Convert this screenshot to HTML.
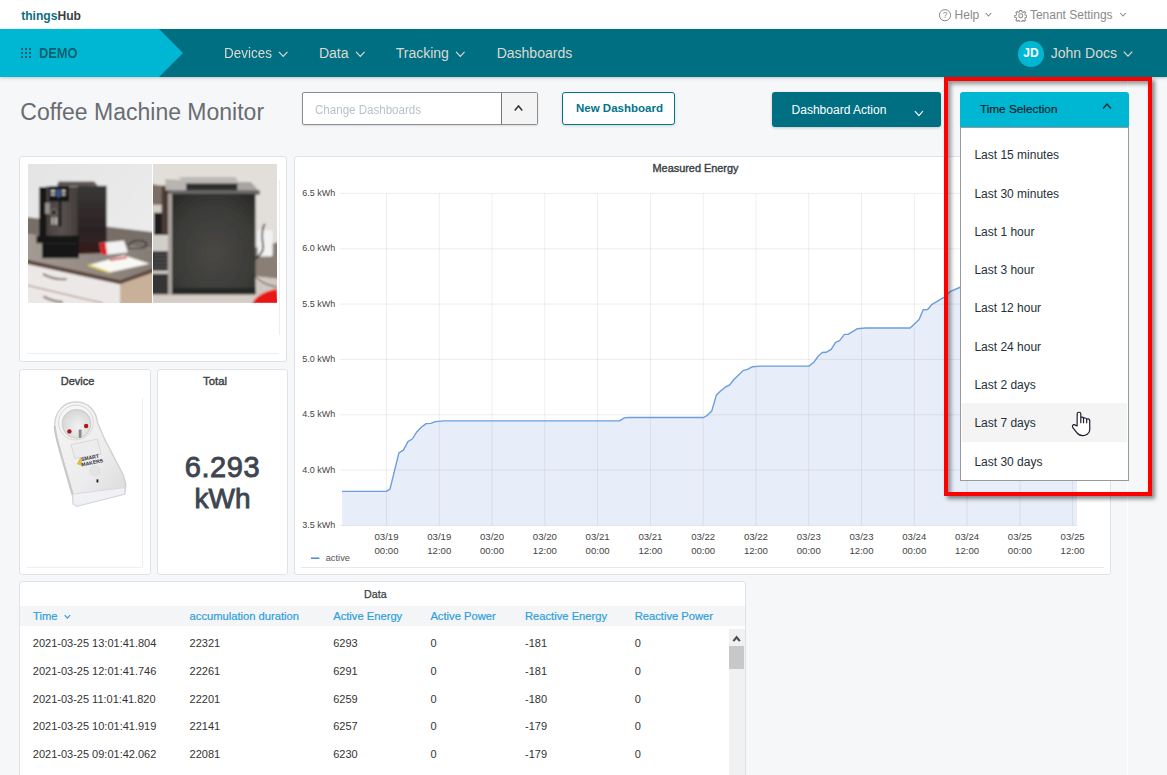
<!DOCTYPE html>
<html><head><meta charset="utf-8">
<style>
*{box-sizing:border-box;margin:0;padding:0}
html,body{width:1167px;height:775px;overflow:hidden;background:#f6f7f9;font-family:"Liberation Sans",sans-serif;position:relative}
.a{position:absolute}
.t{position:absolute;white-space:nowrap;line-height:1}
.card{position:absolute;background:#fff;border:1px solid #dfe3e8;border-radius:3px}
</style></head>
<body>

<div class="a" style="left:0px;top:0px;width:1167px;height:29px;background:#fff"></div>
<div class="t" style="left:21.20px;top:10.36px;font-size:12.1px;color:#0d6e80;font-weight:bold;">things<span style="color:#3a3f44">Hub</span></div>
<svg class="a" style="left:938px;top:9px" width="14" height="13"><circle cx="7" cy="6.2" r="5.6" fill="none" stroke="#8a8a8a" stroke-width="1"/><text x="7" y="9.3" font-size="8.5" text-anchor="middle" fill="#8a8a8a" font-family="Liberation Sans">?</text></svg>
<div class="t" style="left:954.60px;top:8.74px;font-size:12px;color:#8a8a8a;font-weight:normal;">Help</div>
<svg class="a" style="left:0;top:0;overflow:visible" width="1" height="1"><polyline points="985.75,13.0 988.5,16.0 991.25,13.0" fill="none" stroke="#8a8a8a" stroke-width="1.1"/></svg>
<svg class="a" style="left:1013.5px;top:8.5px" width="13.5" height="13.5" viewBox="0 0 24 24"><path fill="none" stroke="#8a8a8a" stroke-width="1.8" d="M12 8.5a3.5 3.5 0 1 0 0 7a3.5 3.5 0 1 0 0-7z M10.3 2.5h3.4l.5 2.6 1.9.8 2.2-1.5 2.4 2.4-1.5 2.2.8 1.9 2.6.5v3.4l-2.6.5-.8 1.9 1.5 2.2-2.4 2.4-2.2-1.5-1.9.8-.5 2.6h-3.4l-.5-2.6-1.9-.8-2.2 1.5-2.4-2.4 1.5-2.2-.8-1.9-2.6-.5v-3.4l2.6-.5.8-1.9-1.5-2.2 2.4-2.4 2.2 1.5 1.9-.8z"/></svg>
<div class="t" style="left:1029.90px;top:8.74px;font-size:12px;color:#8a8a8a;font-weight:normal;">Tenant Settings</div>
<svg class="a" style="left:0;top:0;overflow:visible" width="1" height="1"><polyline points="1120.25,13.0 1123,16.0 1125.75,13.0" fill="none" stroke="#8a8a8a" stroke-width="1.1"/></svg>
<div class="a" style="left:0px;top:29px;width:1167px;height:48px;background:#006f82;box-shadow:0 1px 3px rgba(0,0,0,.22)"></div>
<svg class="a" style="left:0;top:29px" width="190" height="48"><polygon points="0,0 159,0 183,24 159,48 0,48" fill="#00b7d3"/></svg>
<div class="a" style="left:21px;top:48px;width:2.1999999999999993px;height:2.200000000000003px;background:#0a5f70"></div>
<div class="a" style="left:21px;top:52px;width:2.1999999999999993px;height:2.200000000000003px;background:#0a5f70"></div>
<div class="a" style="left:21px;top:56px;width:2.1999999999999993px;height:2.200000000000003px;background:#0a5f70"></div>
<div class="a" style="left:25px;top:48px;width:2.1999999999999993px;height:2.200000000000003px;background:#0a5f70"></div>
<div class="a" style="left:25px;top:52px;width:2.1999999999999993px;height:2.200000000000003px;background:#0a5f70"></div>
<div class="a" style="left:25px;top:56px;width:2.1999999999999993px;height:2.200000000000003px;background:#0a5f70"></div>
<div class="a" style="left:29px;top:48px;width:2.1999999999999993px;height:2.200000000000003px;background:#0a5f70"></div>
<div class="a" style="left:29px;top:52px;width:2.1999999999999993px;height:2.200000000000003px;background:#0a5f70"></div>
<div class="a" style="left:29px;top:56px;width:2.1999999999999993px;height:2.200000000000003px;background:#0a5f70"></div>
<div class="t" style="left:39.40px;top:44.88px;font-size:15.5px;color:#0a5f70;font-weight:bold;transform:scaleX(0.825);transform-origin:0 0">DEMO</div>
<div class="t" style="left:223.50px;top:46.15px;font-size:14px;color:#dcd9d2;font-weight:normal;transform:scaleX(0.964);transform-origin:0 0">Devices</div>
<svg class="a" style="left:0;top:0;overflow:visible" width="1" height="1"><polyline points="278.95,51.95 283.2,56.45 287.45,51.95" fill="none" stroke="#dcd9d2" stroke-width="1.2"/></svg>
<div class="t" style="left:318.90px;top:46.15px;font-size:14px;color:#dcd9d2;font-weight:normal;">Data</div>
<svg class="a" style="left:0;top:0;overflow:visible" width="1" height="1"><polyline points="356.05,51.95 360.3,56.45 364.55,51.95" fill="none" stroke="#dcd9d2" stroke-width="1.2"/></svg>
<div class="t" style="left:395.70px;top:46.15px;font-size:14px;color:#dcd9d2;font-weight:normal;">Tracking</div>
<svg class="a" style="left:0;top:0;overflow:visible" width="1" height="1"><polyline points="456.05,51.95 460.3,56.45 464.55,51.95" fill="none" stroke="#dcd9d2" stroke-width="1.2"/></svg>
<div class="t" style="left:496.70px;top:46.15px;font-size:14px;color:#dcd9d2;font-weight:normal;">Dashboards</div>
<div class="a" style="left:1018.2px;top:41px;width:25.7px;height:25.7px;border-radius:50%;background:#00b7d3"></div>
<div class="t" style="left:831.00px;width:400px;text-align:center;top:47.04px;font-size:12px;color:#fff;font-weight:bold;">JD</div>
<div class="t" style="left:1050.80px;top:45.95px;font-size:14px;color:#dcd9d2;font-weight:normal;">John Docs</div>
<svg class="a" style="left:0;top:0;overflow:visible" width="1" height="1"><polyline points="1123.75,51.65 1128,56.15 1132.25,51.65" fill="none" stroke="#dcd9d2" stroke-width="1.2"/></svg>
<div class="t" style="left:20.30px;top:100.93px;font-size:23px;color:#696d71;font-weight:normal;">Coffee Machine Monitor</div>
<div class="a" style="left:302px;top:92px;width:236px;height:33px;background:#fff;border:1px solid #8c8c8c;border-radius:2px;box-shadow:0 1px 2px rgba(0,0,0,.12)"></div>
<div class="a" style="left:501px;top:93px;width:36px;height:31px;background:#f4f4f4;border-left:1.5px solid #777"></div>
<div class="t" style="left:314.70px;top:103.59px;font-size:12.3px;color:#b9c1cc;font-weight:normal;transform:scaleX(0.94);transform-origin:0 0">Change Dashboards</div>
<svg class="a" style="left:0;top:0;overflow:visible" width="1" height="1"><polyline points="514.75,110.45 518.5,105.95 522.25,110.45" fill="none" stroke="#333" stroke-width="1.5"/></svg>
<div class="a" style="left:562px;top:92px;width:113px;height:33px;background:#fff;border:1.6px solid #00758a;border-radius:3px;box-shadow:0 1px 3px rgba(0,0,0,.15)"></div>
<div class="t" style="left:576.00px;top:102.87px;font-size:11.5px;color:#00748a;font-weight:bold;">New Dashboard</div>
<div class="a" style="left:772px;top:92px;width:169px;height:35px;background:#006f82;border-radius:3px;box-shadow:0 1px 3px rgba(0,0,0,.2)"></div>
<div class="t" style="left:791.60px;top:103.84px;font-size:12px;color:#fff;font-weight:normal;">Dashboard Action</div>
<svg class="a" style="left:0;top:0;overflow:visible" width="1" height="1"><polyline points="914.9,111.05 918.9,115.55 922.9,111.05" fill="none" stroke="#fff" stroke-width="1.1"/></svg>
<div class="card" style="left:19px;top:156px;width:268px;height:206px"></div>
<div class="card" style="left:294px;top:156px;width:817px;height:419px"></div>
<div class="card" style="left:19px;top:369px;width:132px;height:206px"></div>
<div class="card" style="left:157px;top:369px;width:131px;height:206px"></div>
<div class="card" style="left:19px;top:581px;width:727px;height:250px"></div>
<div class="a" style="left:1127px;top:77px;width:1px;height:698px;background:rgba(255,255,255,.8)"></div>
<svg class="a" style="left:0;top:0" width="1167" height="775"><polygon points="342,525.5 342,491.4 386.2,491.4 390,489.1 398.9,452.8 403.4,450.1 407.9,441.7 412.3,439 416.8,431.9 421.2,427.2 426.1,423.6 430.8,423.4 435.3,421.6 443.5,420.9 619.5,420.9 624.3,417.9 628.9,417.5 703.6,417.5 707.3,415.3 711.8,410.9 716.3,395.3 720.3,391.2 725.2,387.2 729.6,385 734.1,379.2 743,370.7 747.4,369.4 752.6,366.7 760.4,366.1 809,366.1 813.8,362.3 818.3,356 822.3,352.5 826.1,352.3 831.2,349.4 835.6,342.4 839.6,340.6 844.4,334.4 848.5,334.2 852.6,331.7 857.4,328.7 865.6,328 910.2,328 919.1,319.4 923.2,309.8 927.6,309.5 932.1,304.3 943.8,297.4 950.6,291.3 959.6,287.5 990,276 1020,250 1050,230 1077,216 1077,525.5" fill="#e8eef9"/><line x1="339.4" y1="193.4" x2="1077" y2="193.4" stroke="rgba(0,0,0,.075)" stroke-width="1"/><line x1="339.4" y1="248.8" x2="1077" y2="248.8" stroke="rgba(0,0,0,.075)" stroke-width="1"/><line x1="339.4" y1="304.1" x2="1077" y2="304.1" stroke="rgba(0,0,0,.075)" stroke-width="1"/><line x1="339.4" y1="359.4" x2="1077" y2="359.4" stroke="rgba(0,0,0,.075)" stroke-width="1"/><line x1="339.4" y1="414.8" x2="1077" y2="414.8" stroke="rgba(0,0,0,.075)" stroke-width="1"/><line x1="339.4" y1="470.1" x2="1077" y2="470.1" stroke="rgba(0,0,0,.075)" stroke-width="1"/><line x1="339.4" y1="525.5" x2="1077" y2="525.5" stroke="rgba(0,0,0,.075)" stroke-width="1"/><line x1="386.5" y1="193.4" x2="386.5" y2="525.5" stroke="rgba(0,0,0,.065)" stroke-width="1"/><line x1="439.3" y1="193.4" x2="439.3" y2="525.5" stroke="rgba(0,0,0,.065)" stroke-width="1"/><line x1="492.1" y1="193.4" x2="492.1" y2="525.5" stroke="rgba(0,0,0,.065)" stroke-width="1"/><line x1="544.8" y1="193.4" x2="544.8" y2="525.5" stroke="rgba(0,0,0,.065)" stroke-width="1"/><line x1="597.6" y1="193.4" x2="597.6" y2="525.5" stroke="rgba(0,0,0,.065)" stroke-width="1"/><line x1="650.4" y1="193.4" x2="650.4" y2="525.5" stroke="rgba(0,0,0,.065)" stroke-width="1"/><line x1="703.2" y1="193.4" x2="703.2" y2="525.5" stroke="rgba(0,0,0,.065)" stroke-width="1"/><line x1="756.0" y1="193.4" x2="756.0" y2="525.5" stroke="rgba(0,0,0,.065)" stroke-width="1"/><line x1="808.7" y1="193.4" x2="808.7" y2="525.5" stroke="rgba(0,0,0,.065)" stroke-width="1"/><line x1="861.5" y1="193.4" x2="861.5" y2="525.5" stroke="rgba(0,0,0,.065)" stroke-width="1"/><line x1="914.3" y1="193.4" x2="914.3" y2="525.5" stroke="rgba(0,0,0,.065)" stroke-width="1"/><line x1="967.1" y1="193.4" x2="967.1" y2="525.5" stroke="rgba(0,0,0,.065)" stroke-width="1"/><line x1="1019.9" y1="193.4" x2="1019.9" y2="525.5" stroke="rgba(0,0,0,.065)" stroke-width="1"/><line x1="1072.6" y1="193.4" x2="1072.6" y2="525.5" stroke="rgba(0,0,0,.065)" stroke-width="1"/><polyline points="342,491.4 386.2,491.4 390,489.1 398.9,452.8 403.4,450.1 407.9,441.7 412.3,439 416.8,431.9 421.2,427.2 426.1,423.6 430.8,423.4 435.3,421.6 443.5,420.9 619.5,420.9 624.3,417.9 628.9,417.5 703.6,417.5 707.3,415.3 711.8,410.9 716.3,395.3 720.3,391.2 725.2,387.2 729.6,385 734.1,379.2 743,370.7 747.4,369.4 752.6,366.7 760.4,366.1 809,366.1 813.8,362.3 818.3,356 822.3,352.5 826.1,352.3 831.2,349.4 835.6,342.4 839.6,340.6 844.4,334.4 848.5,334.2 852.6,331.7 857.4,328.7 865.6,328 910.2,328 919.1,319.4 923.2,309.8 927.6,309.5 932.1,304.3 943.8,297.4 950.6,291.3 959.6,287.5 990,276 1020,250 1050,230 1077,216" fill="none" stroke="#6b9de0" stroke-width="1.4" stroke-linejoin="round"/><line x1="311" y1="558.2" x2="319.4" y2="558.2" stroke="#4a87dc" stroke-width="1.5"/><line x1="301" y1="567.5" x2="1104" y2="567.5" stroke="#e6e8eb" stroke-width="1"/></svg>
<div class="t" style="left:495.50px;width:400px;text-align:center;top:162.97px;font-size:10.9px;color:#3b3f46;font-weight:normal;-webkit-text-stroke:0.4px #3b3f46">Measured Energy</div>
<div class="t" style="left:-64.70px;width:400px;text-align:right;top:189.08px;font-size:9px;color:#444;font-weight:normal;">6.5 kWh</div>
<div class="t" style="left:-64.70px;width:400px;text-align:right;top:244.43px;font-size:9px;color:#444;font-weight:normal;">6.0 kWh</div>
<div class="t" style="left:-64.70px;width:400px;text-align:right;top:299.78px;font-size:9px;color:#444;font-weight:normal;">5.5 kWh</div>
<div class="t" style="left:-64.70px;width:400px;text-align:right;top:355.13px;font-size:9px;color:#444;font-weight:normal;">5.0 kWh</div>
<div class="t" style="left:-64.70px;width:400px;text-align:right;top:410.48px;font-size:9px;color:#444;font-weight:normal;">4.5 kWh</div>
<div class="t" style="left:-64.70px;width:400px;text-align:right;top:465.83px;font-size:9px;color:#444;font-weight:normal;">4.0 kWh</div>
<div class="t" style="left:-64.70px;width:400px;text-align:right;top:521.18px;font-size:9px;color:#444;font-weight:normal;">3.5 kWh</div>
<div class="t" style="left:186.50px;width:400px;text-align:center;top:531.97px;font-size:9.6px;color:#444;font-weight:normal;">03/19</div>
<div class="t" style="left:186.50px;width:400px;text-align:center;top:545.87px;font-size:9.6px;color:#444;font-weight:normal;">00:00</div>
<div class="t" style="left:239.28px;width:400px;text-align:center;top:531.97px;font-size:9.6px;color:#444;font-weight:normal;">03/19</div>
<div class="t" style="left:239.28px;width:400px;text-align:center;top:545.87px;font-size:9.6px;color:#444;font-weight:normal;">12:00</div>
<div class="t" style="left:292.06px;width:400px;text-align:center;top:531.97px;font-size:9.6px;color:#444;font-weight:normal;">03/20</div>
<div class="t" style="left:292.06px;width:400px;text-align:center;top:545.87px;font-size:9.6px;color:#444;font-weight:normal;">00:00</div>
<div class="t" style="left:344.84px;width:400px;text-align:center;top:531.97px;font-size:9.6px;color:#444;font-weight:normal;">03/20</div>
<div class="t" style="left:344.84px;width:400px;text-align:center;top:545.87px;font-size:9.6px;color:#444;font-weight:normal;">12:00</div>
<div class="t" style="left:397.62px;width:400px;text-align:center;top:531.97px;font-size:9.6px;color:#444;font-weight:normal;">03/21</div>
<div class="t" style="left:397.62px;width:400px;text-align:center;top:545.87px;font-size:9.6px;color:#444;font-weight:normal;">00:00</div>
<div class="t" style="left:450.40px;width:400px;text-align:center;top:531.97px;font-size:9.6px;color:#444;font-weight:normal;">03/21</div>
<div class="t" style="left:450.40px;width:400px;text-align:center;top:545.87px;font-size:9.6px;color:#444;font-weight:normal;">12:00</div>
<div class="t" style="left:503.18px;width:400px;text-align:center;top:531.97px;font-size:9.6px;color:#444;font-weight:normal;">03/22</div>
<div class="t" style="left:503.18px;width:400px;text-align:center;top:545.87px;font-size:9.6px;color:#444;font-weight:normal;">00:00</div>
<div class="t" style="left:555.96px;width:400px;text-align:center;top:531.97px;font-size:9.6px;color:#444;font-weight:normal;">03/22</div>
<div class="t" style="left:555.96px;width:400px;text-align:center;top:545.87px;font-size:9.6px;color:#444;font-weight:normal;">12:00</div>
<div class="t" style="left:608.74px;width:400px;text-align:center;top:531.97px;font-size:9.6px;color:#444;font-weight:normal;">03/23</div>
<div class="t" style="left:608.74px;width:400px;text-align:center;top:545.87px;font-size:9.6px;color:#444;font-weight:normal;">00:00</div>
<div class="t" style="left:661.52px;width:400px;text-align:center;top:531.97px;font-size:9.6px;color:#444;font-weight:normal;">03/23</div>
<div class="t" style="left:661.52px;width:400px;text-align:center;top:545.87px;font-size:9.6px;color:#444;font-weight:normal;">12:00</div>
<div class="t" style="left:714.30px;width:400px;text-align:center;top:531.97px;font-size:9.6px;color:#444;font-weight:normal;">03/24</div>
<div class="t" style="left:714.30px;width:400px;text-align:center;top:545.87px;font-size:9.6px;color:#444;font-weight:normal;">00:00</div>
<div class="t" style="left:767.08px;width:400px;text-align:center;top:531.97px;font-size:9.6px;color:#444;font-weight:normal;">03/24</div>
<div class="t" style="left:767.08px;width:400px;text-align:center;top:545.87px;font-size:9.6px;color:#444;font-weight:normal;">12:00</div>
<div class="t" style="left:819.86px;width:400px;text-align:center;top:531.97px;font-size:9.6px;color:#444;font-weight:normal;">03/25</div>
<div class="t" style="left:819.86px;width:400px;text-align:center;top:545.87px;font-size:9.6px;color:#444;font-weight:normal;">00:00</div>
<div class="t" style="left:872.64px;width:400px;text-align:center;top:531.97px;font-size:9.6px;color:#444;font-weight:normal;">03/25</div>
<div class="t" style="left:872.64px;width:400px;text-align:center;top:545.87px;font-size:9.6px;color:#444;font-weight:normal;">12:00</div>
<div class="t" style="left:325.70px;top:553.93px;font-size:9.3px;color:#555;font-weight:normal;">active</div>
<svg class="a" style="left:28px;top:164px" width="124" height="138.5" viewBox="0 0 124 138.5">
<defs><filter id="bl" x="-5%" y="-5%" width="110%" height="110%"><feGaussianBlur stdDeviation="0.9"/></filter>
<linearGradient id="wall1" x1="0" y1="0" x2="1" y2="1"><stop offset="0" stop-color="#e4e4e4"/><stop offset="1" stop-color="#eeeeee"/></linearGradient>
<linearGradient id="ctr1" x1="0" y1="0" x2="1" y2="0"><stop offset="0" stop-color="#a39b94"/><stop offset="1" stop-color="#857b75"/></linearGradient>
<linearGradient id="mach1" x1="0" y1="0" x2="0" y2="1"><stop offset="0" stop-color="#3a3636"/><stop offset=".7" stop-color="#2a2222"/><stop offset="1" stop-color="#3a1c1c"/></linearGradient>
<linearGradient id="front1" x1="0" y1="0" x2="1" y2="0"><stop offset="0" stop-color="#463f3c"/><stop offset=".5" stop-color="#595250"/><stop offset="1" stop-color="#433c3a"/></linearGradient></defs>
<g filter="url(#bl)">
<rect x="-2" y="-2" width="128" height="142.5" fill="url(#wall1)"/>
<polygon points="-2,53 126,68.3 126,85 -2,70" fill="#786e68"/>
<polygon points="-2,70 126,85 126,103.8 92,115.8 -2,95.2" fill="url(#ctr1)"/>
<polygon points="-2,95.2 92,115.8 126,103.8 126,108.5 92,120.5 -2,100" fill="#5e4a40"/>
<polygon points="-2,100 92,120.5 92,140.5 -2,140.5" fill="#ede8e8"/>
<polygon points="92,120.5 126,108.5 126,140.5 92,140.5" fill="#c9b199"/>
<polyline points="-2,121 62,136.2 75,139" stroke="#9a6a58" stroke-width="0.9" fill="none"/>
<path d="M15,110 C22,114 30,116 38.6,115" stroke="#8a7a72" stroke-width="2.2" fill="none"/>
<path d="M15.4,132.5 C22,136 28,138 35,138" stroke="#8a7a72" stroke-width="2.2" fill="none"/>
<rect x="18" y="22.5" width="32" height="50" fill="url(#front1)"/>
<polygon points="49.7,22 78.6,21.8 78.6,89 49.7,90" fill="url(#mach1)"/>
<rect x="11.3" y="23" width="7" height="50" fill="#141212"/>
<polygon points="30.3,17.6 66,17.6 70,21.8 29,22.6" fill="#5a5452"/>
<rect x="21.2" y="22.2" width="19.9" height="15.3" fill="#141414"/>
<rect x="23" y="26" width="4" height="2" fill="#d0d0d0"/><rect x="23" y="29.5" width="4" height="2" fill="#d0d0d0"/>
<rect x="33.9" y="26" width="3.6" height="2" fill="#d0d0d0"/><rect x="33.9" y="29.5" width="3.6" height="2" fill="#d0d0d0"/>
<rect x="28.5" y="25.3" width="4" height="8" fill="#3a5a90"/>
<rect x="30.7" y="37.5" width="2.8" height="25" fill="#1a1a1a"/>
<rect x="17.2" y="38.9" width="4.5" height="11" fill="#9a9590"/>
<circle cx="25.8" cy="48.4" r="3" fill="#1e1e1e" stroke="#b0a8a0" stroke-width=".7"/>
<rect x="23.5" y="53.3" width="2" height="7.3" fill="#c8c0b8"/><rect x="27" y="53.3" width="2" height="7.3" fill="#c8c0b8"/>
<rect x="8.5" y="71.7" width="42.5" height="7.5" fill="#121212"/>
<rect x="14" y="79.2" width="37" height="15" fill="#141414"/>
<polygon points="71.3,79 96,76.6 99.9,88.5 74,91.2" fill="#f2f2f2"/>
<polygon points="71.3,79 77.6,78.4 79.2,90.6 74,91.2" fill="#d82424"/>
<path d="M100,82 C103,75 117,75 118.5,80 C118.5,85 108,85 100,84" stroke="#1a1a1a" stroke-width="1.1" fill="none"/>
<polygon points="60,101.2 95.9,91.2 121.8,99.8 81.3,108.5" fill="#f8f8f4"/>
<polyline points="60,101.2 81.3,108.5" stroke="#e2cc30" stroke-width="1.8" fill="none"/>
<line x1="82" y1="96.3" x2="98.6" y2="93.4" stroke="#d82020" stroke-width="1.6"/>
</g></svg>
<svg class="a" style="left:153.3px;top:164px" width="123.7" height="138.5" viewBox="0 0 123.7 138.5">
<defs><filter id="bl2" x="-5%" y="-5%" width="110%" height="110%"><feGaussianBlur stdDeviation="0.9"/></filter>
<radialGradient id="mach2" cx=".5" cy=".6" r=".7"><stop offset="0" stop-color="#4a4846"/><stop offset=".7" stop-color="#3a3a38"/><stop offset="1" stop-color="#2c2c2a"/></radialGradient></defs>
<g filter="url(#bl2)">
<rect x="-2" y="-2" width="128" height="142.5" fill="#e2deda"/>
<polygon points="-2,20 10,22 10,41 -2,41" fill="#7a6e66"/>
<rect x="-2" y="40.7" width="18" height="70" fill="#d4cec8"/>
<rect x="1" y="48.8" width="14" height="22" fill="#1c1c1c"/>
<rect x="-2" y="87.3" width="16.7" height="19.3" fill="#2a2a2a"/>
<line x1="0" y1="91" x2="14" y2="91" stroke="#888" stroke-width=".8"/><line x1="0" y1="95" x2="14" y2="95" stroke="#888" stroke-width=".8"/><line x1="0" y1="99" x2="14" y2="99" stroke="#888" stroke-width=".8"/><line x1="0" y1="103" x2="14" y2="103" stroke="#888" stroke-width=".8"/>
<rect x="-2" y="109.8" width="23" height="21" fill="#353535"/>
<polygon points="8.7,21.7 17.8,21.7 17.8,70 8.7,70" fill="#4a3a30"/>
<polygon points="100.4,84 126,78 126,115 100.4,112" fill="#8a7e74"/>
<polygon points="100.4,112 126,115 126,131 100.4,131" fill="#d0c8c0"/>
<rect x="104.7" y="66" width="15" height="26.6" rx="2" fill="#f2f2f2"/>
<path d="M112,60 C108,64 109,74 110,82 C111,88 106,92 101,96" stroke="#151515" stroke-width="1.5" fill="none"/>
<path d="M101,110 C106,118 114,121 124,123" stroke="#222" stroke-width="1" fill="none"/>
<polygon points="12.4,15 33,16.5 33,26.2 12.4,26.2" fill="#b8b4b0"/>
<polygon points="25,13 82.5,13 86,19.4 33,19.4" fill="#bdb9b5"/>
<rect x="33.2" y="19.4" width="52.8" height="7.6" fill="#2a2e2e"/>
<polygon points="84.3,18 98,18 106.8,28 106.8,30.7 84.3,30.7" fill="#a8a4a0"/>
<rect x="15" y="26.2" width="91.8" height="4.5" fill="#6a6866"/>
<rect x="19" y="29.8" width="83.5" height="101" fill="url(#mach2)"/>
<rect x="15" y="29.8" width="4" height="101" fill="#a8a29c"/>
<rect x="19" y="124" width="83.5" height="7" fill="#262626"/>
<rect x="-2" y="130.5" width="128" height="10" fill="#d6cec6"/>
<path d="M99.3,140 C102,132 112,127 124,124.8 L126,140 Z" fill="#e81818"/>
</g></svg>
<div class="a" style="left:279.3px;top:180px;width:1.0px;height:155px;background:#eceef0"></div>
<div class="a" style="left:27px;top:353.2px;width:251.60000000000002px;height:1.0px;background:#eceef0"></div>
<div class="t" style="left:-122.40px;width:400px;text-align:center;top:376.09px;font-size:11px;color:#3b3f46;font-weight:normal;-webkit-text-stroke:0.4px #3b3f46">Device</div>
<svg class="a" style="left:40px;top:395px" width="100" height="120" viewBox="0 0 646 775">
<defs>
<linearGradient id="plg" x1="0" y1="0" x2="1" y2="1"><stop offset="0" stop-color="#f6f6f6"/><stop offset=".6" stop-color="#ececec"/><stop offset="1" stop-color="#d8d8d8"/></linearGradient>
<radialGradient id="sock" cx=".55" cy=".6" r=".6"><stop offset="0" stop-color="#f2f2f2"/><stop offset="1" stop-color="#d6d6d6"/></radialGradient></defs>
<path d="M95,200 C95,100 160,45 230,45 C310,45 365,100 370,175 L420,290 L540,520 L555,580 L548,640 L240,718 L215,705 L210,650 L100,250 Z" fill="url(#plg)" stroke="#cfcfcf" stroke-width="8"/>
<path d="M212,640 L548,598 L548,640 L240,718 L215,705 Z" fill="#f0f1f4" stroke="#d8d8dc" stroke-width="6"/>
<path d="M95,200 C100,260 110,300 210,640" fill="none" stroke="#c8c8c8" stroke-width="14"/>
<circle cx="232" cy="178" r="112" fill="#f6f6f6" stroke="#d4d4d4" stroke-width="6"/>
<circle cx="236" cy="186" r="92" fill="url(#sock)" stroke="#cfcfcf" stroke-width="8"/>
<circle cx="190" cy="235" r="14" fill="#a81818"/>
<circle cx="298" cy="200" r="14" fill="#a81818"/>
<rect x="250" y="222" width="18" height="55" rx="6" fill="#8a8a8a"/>
<polygon points="200,320 370,285 395,380 225,410" fill="#ececec" stroke="#d2d2d2" stroke-width="5"/>
<polygon points="238,445 262,400 275,460" fill="#d8c040"/>
<text x="268" y="428" font-family="Liberation Sans" font-weight="bold" font-size="33" fill="#2e2e3c" transform="rotate(-12 268 428)">SMART</text>
<text x="270" y="462" font-family="Liberation Sans" font-weight="bold" font-size="33" fill="#2e2e3c" transform="rotate(-12 270 462)">MAKERS</text>
<circle cx="355" cy="490" r="32" fill="#e4e4e4" stroke="#d8d8d8" stroke-width="4"/>
<rect x="365" y="545" width="12" height="20" fill="#222"/>
</svg>
<div class="a" style="left:142px;top:398px;width:1px;height:169.70000000000005px;background:#eceef0"></div>
<div class="a" style="left:26.7px;top:566.7px;width:114.3px;height:1.0px;background:#eceef0"></div>
<div class="t" style="left:15.00px;width:400px;text-align:center;top:375.63px;font-size:11.3px;color:#3b3f46;font-weight:normal;-webkit-text-stroke:0.4px #3b3f46">Total</div>
<div class="t" style="left:22.50px;width:400px;text-align:center;top:452.65px;font-size:29px;color:#3d4650;font-weight:normal;letter-spacing:0.6px;-webkit-text-stroke:0.9px #3d4650">6.293</div>
<div class="t" style="left:22.50px;width:400px;text-align:center;top:484.70px;font-size:28px;color:#3d4650;font-weight:normal;-webkit-text-stroke:0.9px #3d4650">kWh</div>
<div class="t" style="left:175.30px;width:400px;text-align:center;top:589.04px;font-size:10.7px;color:#3b3f46;font-weight:normal;-webkit-text-stroke:0.25px #3b3f46">Data</div>
<div class="a" style="left:20px;top:606px;width:725px;height:20px;background:#f4f5f7"></div>
<div class="t" style="left:33.10px;top:611.12px;font-size:11.2px;color:#2d9fdc;font-weight:normal;-webkit-text-stroke:0.2px #2d9fdc">Time</div>
<div class="t" style="left:189.60px;top:611.12px;font-size:11.2px;color:#2d9fdc;font-weight:normal;-webkit-text-stroke:0.2px #2d9fdc">accumulation duration</div>
<div class="t" style="left:333.20px;top:611.12px;font-size:11.2px;color:#2d9fdc;font-weight:normal;-webkit-text-stroke:0.2px #2d9fdc">Active Energy</div>
<div class="t" style="left:430.40px;top:611.12px;font-size:11.2px;color:#2d9fdc;font-weight:normal;-webkit-text-stroke:0.2px #2d9fdc">Active Power</div>
<div class="t" style="left:525.00px;top:611.12px;font-size:11.2px;color:#2d9fdc;font-weight:normal;-webkit-text-stroke:0.2px #2d9fdc">Reactive Energy</div>
<div class="t" style="left:634.70px;top:611.12px;font-size:11.2px;color:#2d9fdc;font-weight:normal;-webkit-text-stroke:0.2px #2d9fdc">Reactive Power</div>
<svg class="a" style="left:0;top:0;overflow:visible" width="1" height="1"><polyline points="64.65,615.2 67.4,618.2 70.15,615.2" fill="none" stroke="#2d9fdc" stroke-width="1.2"/></svg>
<div class="t" style="left:32.80px;top:638.09px;font-size:11px;color:#333;font-weight:normal;">2021-03-25 13:01:41.804</div>
<div class="t" style="left:189.60px;top:638.09px;font-size:11px;color:#333;font-weight:normal;">22321</div>
<div class="t" style="left:333.20px;top:638.09px;font-size:11px;color:#333;font-weight:normal;">6293</div>
<div class="t" style="left:430.40px;top:638.09px;font-size:11px;color:#333;font-weight:normal;">0</div>
<div class="t" style="left:525.00px;top:638.09px;font-size:11px;color:#333;font-weight:normal;">-181</div>
<div class="t" style="left:634.70px;top:638.09px;font-size:11px;color:#333;font-weight:normal;">0</div>
<div class="t" style="left:32.80px;top:666.09px;font-size:11px;color:#333;font-weight:normal;">2021-03-25 12:01:41.746</div>
<div class="t" style="left:189.60px;top:666.09px;font-size:11px;color:#333;font-weight:normal;">22261</div>
<div class="t" style="left:333.20px;top:666.09px;font-size:11px;color:#333;font-weight:normal;">6291</div>
<div class="t" style="left:430.40px;top:666.09px;font-size:11px;color:#333;font-weight:normal;">0</div>
<div class="t" style="left:525.00px;top:666.09px;font-size:11px;color:#333;font-weight:normal;">-181</div>
<div class="t" style="left:634.70px;top:666.09px;font-size:11px;color:#333;font-weight:normal;">0</div>
<div class="t" style="left:32.80px;top:693.89px;font-size:11px;color:#333;font-weight:normal;">2021-03-25 11:01:41.820</div>
<div class="t" style="left:189.60px;top:693.89px;font-size:11px;color:#333;font-weight:normal;">22201</div>
<div class="t" style="left:333.20px;top:693.89px;font-size:11px;color:#333;font-weight:normal;">6259</div>
<div class="t" style="left:430.40px;top:693.89px;font-size:11px;color:#333;font-weight:normal;">0</div>
<div class="t" style="left:525.00px;top:693.89px;font-size:11px;color:#333;font-weight:normal;">-180</div>
<div class="t" style="left:634.70px;top:693.89px;font-size:11px;color:#333;font-weight:normal;">0</div>
<div class="t" style="left:32.80px;top:721.09px;font-size:11px;color:#333;font-weight:normal;">2021-03-25 10:01:41.919</div>
<div class="t" style="left:189.60px;top:721.09px;font-size:11px;color:#333;font-weight:normal;">22141</div>
<div class="t" style="left:333.20px;top:721.09px;font-size:11px;color:#333;font-weight:normal;">6257</div>
<div class="t" style="left:430.40px;top:721.09px;font-size:11px;color:#333;font-weight:normal;">0</div>
<div class="t" style="left:525.00px;top:721.09px;font-size:11px;color:#333;font-weight:normal;">-179</div>
<div class="t" style="left:634.70px;top:721.09px;font-size:11px;color:#333;font-weight:normal;">0</div>
<div class="t" style="left:32.80px;top:749.09px;font-size:11px;color:#333;font-weight:normal;">2021-03-25 09:01:42.062</div>
<div class="t" style="left:189.60px;top:749.09px;font-size:11px;color:#333;font-weight:normal;">22081</div>
<div class="t" style="left:333.20px;top:749.09px;font-size:11px;color:#333;font-weight:normal;">6230</div>
<div class="t" style="left:430.40px;top:749.09px;font-size:11px;color:#333;font-weight:normal;">0</div>
<div class="t" style="left:525.00px;top:749.09px;font-size:11px;color:#333;font-weight:normal;">-179</div>
<div class="t" style="left:634.70px;top:749.09px;font-size:11px;color:#333;font-weight:normal;">0</div>
<div class="a" style="left:729px;top:629px;width:16px;height:146px;background:#f1f1f1"></div>
<div class="a" style="left:729px;top:646px;width:15px;height:23px;background:#c8c8c8"></div>
<svg class="a" style="left:0;top:0;overflow:visible" width="1" height="1"><polyline points="733.35,641.1 736.6,637.3000000000001 739.85,641.1" fill="none" stroke="#505050" stroke-width="2.2"/></svg>
<div class="a" style="left:960px;top:92px;width:169px;height:35px;background:#00b7d3;border-radius:3px 3px 0 0"></div>
<div class="t" style="left:979.90px;top:103.81px;font-size:11.8px;color:#10222a;font-weight:normal;-webkit-text-stroke:0.2px #10222a">Time Selection</div>
<svg class="a" style="left:0;top:0;overflow:visible" width="1" height="1"><polyline points="1103.0,108.45 1107,103.95 1111.0,108.45" fill="none" stroke="#1b2b33" stroke-width="1.4"/></svg>
<div class="a" style="left:960px;top:127px;width:169px;height:354px;background:#fff;border:1px solid #999"></div>
<div class="a" style="left:962px;top:403.4px;width:165px;height:38.60000000000002px;background:#f4f4f4"></div>
<div class="t" style="left:974.40px;top:149.34px;font-size:12px;color:#263036;font-weight:normal;">Last 15 minutes</div>
<div class="t" style="left:974.40px;top:187.61px;font-size:12px;color:#263036;font-weight:normal;">Last 30 minutes</div>
<div class="t" style="left:974.40px;top:225.88px;font-size:12px;color:#263036;font-weight:normal;">Last 1 hour</div>
<div class="t" style="left:974.40px;top:264.15px;font-size:12px;color:#263036;font-weight:normal;">Last 3 hour</div>
<div class="t" style="left:974.40px;top:302.42px;font-size:12px;color:#263036;font-weight:normal;">Last 12 hour</div>
<div class="t" style="left:974.40px;top:340.69px;font-size:12px;color:#263036;font-weight:normal;">Last 24 hour</div>
<div class="t" style="left:974.40px;top:378.96px;font-size:12px;color:#263036;font-weight:normal;">Last 2 days</div>
<div class="t" style="left:974.40px;top:417.23px;font-size:12px;color:#263036;font-weight:normal;">Last 7 days</div>
<div class="t" style="left:974.40px;top:455.50px;font-size:12px;color:#263036;font-weight:normal;">Last 30 days</div>
<svg class="a" style="left:1065px;top:405px" width="35" height="35" viewBox="0 0 775 775"><path d="M268,465 L270,195 C270,148 350,148 350,195 L350,290 C350,262 410,262 410,300 C410,280 480,280 480,320 C480,300 548,300 548,345 L548,540 C548,625 470,678 390,678 C330,678 290,650 262,612 L178,505 C148,470 172,425 218,440 L268,465 Z M350,290 L350,392 M410,300 L410,392 M480,320 L480,395" fill="#fff" stroke="#1a1a28" stroke-width="26" stroke-linejoin="round" stroke-linecap="round"/></svg>
<div class="a" style="left:944px;top:76.5px;width:208px;height:419px;border:4px solid #ff0000;box-shadow:3px 3px 4px rgba(0,0,0,.45), inset 3px 3px 4px rgba(0,0,0,.4)"></div>
</body></html>
